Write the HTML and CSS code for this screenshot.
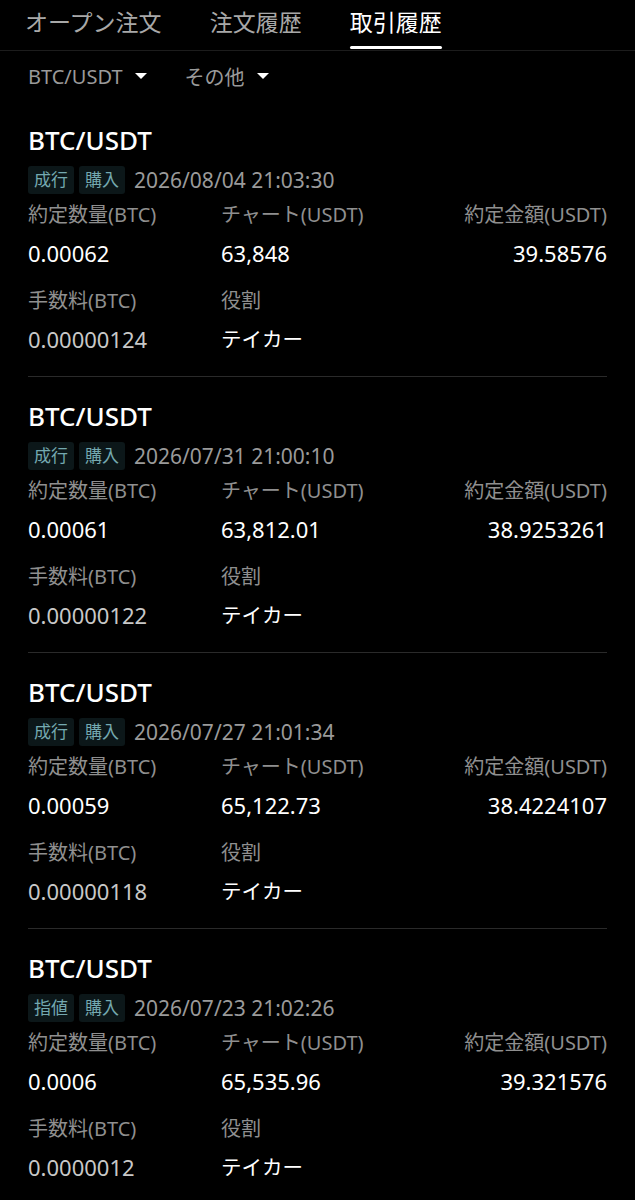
FILE: index.html
```html
<!DOCTYPE html>
<html lang="ja">
<head>
	<meta charset="utf-8">
	<title>取引履歴</title>
	<meta name="viewport" content="width=device-width,initial-scale=1">
	<link rel="stylesheet" href="styles.css">
</head>
<body>
	<nav class="tabs">
		<span class="tab">オープン注文</span>
		<span class="tab">注文履歴</span>
		<span class="tab active">取引履歴</span>
	</nav>
	<div class="filters">
		<span class="filter">BTC/USDT <i class="caret"></i></span>
		<span class="filter">その他 <i class="caret"></i></span>
	</div>
	<main class="list">
		<article class="trade">
			<h2 class="pair">BTC/USDT</h2>
			<div class="meta"><span class="tag">成行</span><span class="tag">購入</span><span class="time">2026/08/04 21:03:30</span></div>
			<div class="grid">
				<div class="cell"><span class="label">約定数量(BTC)</span><span class="value">0.00062</span></div>
				<div class="cell"><span class="label">チャート(USDT)</span><span class="value">63,848</span></div>
				<div class="cell right"><span class="label">約定金額(USDT)</span><span class="value">39.58576</span></div>
				<div class="cell"><span class="label">手数料(BTC)</span><span class="value dim">0.00000124</span></div>
				<div class="cell"><span class="label">役割</span><span class="value jp">テイカー</span></div>
			</div>
		</article>
		<article class="trade">
			<h2 class="pair">BTC/USDT</h2>
			<div class="meta"><span class="tag">成行</span><span class="tag">購入</span><span class="time">2026/07/31 21:00:10</span></div>
			<div class="grid">
				<div class="cell"><span class="label">約定数量(BTC)</span><span class="value">0.00061</span></div>
				<div class="cell"><span class="label">チャート(USDT)</span><span class="value">63,812.01</span></div>
				<div class="cell right"><span class="label">約定金額(USDT)</span><span class="value">38.9253261</span></div>
				<div class="cell"><span class="label">手数料(BTC)</span><span class="value dim">0.00000122</span></div>
				<div class="cell"><span class="label">役割</span><span class="value jp">テイカー</span></div>
			</div>
		</article>
		<article class="trade">
			<h2 class="pair">BTC/USDT</h2>
			<div class="meta"><span class="tag">成行</span><span class="tag">購入</span><span class="time">2026/07/27 21:01:34</span></div>
			<div class="grid">
				<div class="cell"><span class="label">約定数量(BTC)</span><span class="value">0.00059</span></div>
				<div class="cell"><span class="label">チャート(USDT)</span><span class="value">65,122.73</span></div>
				<div class="cell right"><span class="label">約定金額(USDT)</span><span class="value">38.4224107</span></div>
				<div class="cell"><span class="label">手数料(BTC)</span><span class="value dim">0.00000118</span></div>
				<div class="cell"><span class="label">役割</span><span class="value jp">テイカー</span></div>
			</div>
		</article>
		<article class="trade">
			<h2 class="pair">BTC/USDT</h2>
			<div class="meta"><span class="tag">指値</span><span class="tag">購入</span><span class="time">2026/07/23 21:02:26</span></div>
			<div class="grid">
				<div class="cell"><span class="label">約定数量(BTC)</span><span class="value">0.0006</span></div>
				<div class="cell"><span class="label">チャート(USDT)</span><span class="value">65,535.96</span></div>
				<div class="cell right"><span class="label">約定金額(USDT)</span><span class="value">39.321576</span></div>
				<div class="cell"><span class="label">手数料(BTC)</span><span class="value dim">0.0000012</span></div>
				<div class="cell"><span class="label">役割</span><span class="value jp">テイカー</span></div>
			</div>
		</article>
	</main>
</body>
</html>
```

FILE: styles.css
```css
body {
	background: #000;
	color: #fff;
	font-family: "Noto Sans", "Noto Sans CJK JP", sans-serif;
	margin: 0;
	overflow: hidden;
	width: 635px;
}

.tabs {
	border-bottom: 1px solid #1c1c1c;
	display: flex;
	gap: 48px;
	height: 50px;
	padding: 0 25px;
}

.tab {
	color: #a8a8a8;
	font-size: 23px;
	line-height: 44px;
	position: relative;
}

.tab.active {
	color: #fff;
}

.tab.active::after {
	background: #fff;
	border-radius: 2px;
	bottom: 1px;
	content: "";
	height: 3px;
	left: 0;
	position: absolute;
	right: 0;
}

.filters {
	align-items: center;
	display: flex;
	gap: 38px;
	height: 50px;
	padding: 0 28px;
}

.filter {
	align-items: center;
	color: #9a9a9a;
	display: flex;
	font-size: 20px;
	gap: 12px;
}

.caret {
	border-left: 6px solid transparent;
	border-right: 6px solid transparent;
	border-top: 6px solid #fff;
	display: inline-block;
	height: 0;
	width: 0;
}

.list {
	padding: 0 28px;
}

.trade {
	border-bottom: 1px solid #2a2a2a;
	box-sizing: border-box;
	height: 276px;
	padding-top: 22px;
}

.pair {
	font-size: 26px;
	font-weight: 500;
	line-height: 34px;
	margin: 0;
}

.meta {
	align-items: center;
	display: flex;
	gap: 5px;
	margin-top: 9px;
}

.tag {
	background: #0c1719;
	border-radius: 3px;
	color: #74a9b0;
	font-size: 17px;
	line-height: 28px;
	padding: 0 6px;
}

.time {
	color: #9a9a9a;
	font-size: 21px;
	line-height: 28px;
	margin-left: 4px;
}

.grid {
	display: grid;
	grid-template-columns: 193px 1fr 1fr;
	margin-top: 5px;
	row-gap: 10px;
}

.cell {
	display: flex;
	flex-direction: column;
}

.cell.right {
	text-align: right;
}

.label {
	color: #8f8f8f;
	font-size: 20px;
	line-height: 32px;
}

.value {
	font-size: 22px;
	line-height: 44px;
}

.value.jp {
	font-size: 20.5px;
}

.value.dim {
	color: #c8c8c8;
}
```
